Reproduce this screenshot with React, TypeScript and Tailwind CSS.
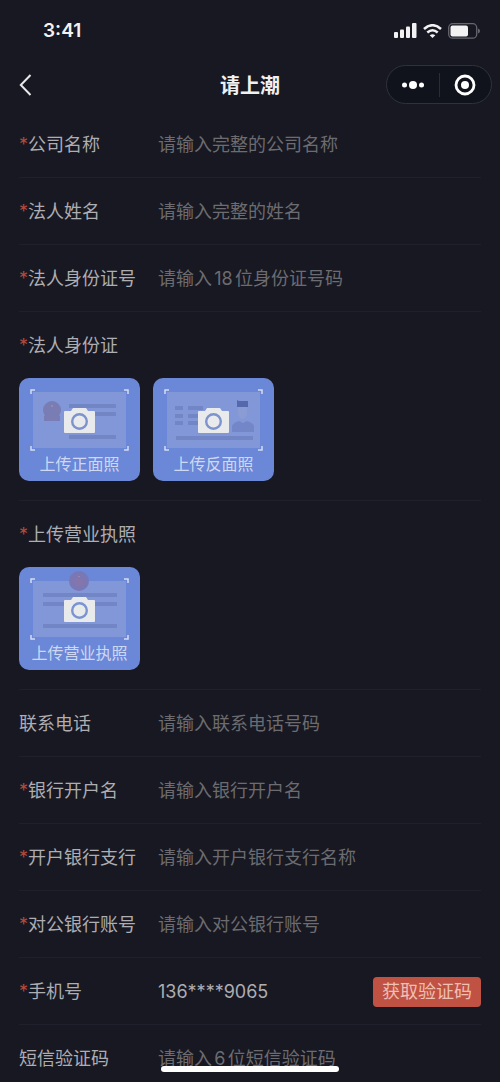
import React from "react";

type FieldProps = {
  id: string;
  label: string;
  required?: boolean;
  placeholder?: string;
  defaultValue?: string;
  type?: string;
  children?: React.ReactNode;
};

const RequiredMark = () => <span className="text-[#b34a3b]">*</span>;

const Field = ({
  id,
  label,
  required = true,
  placeholder,
  defaultValue,
  type = "text",
  children,
}: FieldProps) => {
  return (
    <div className="flex h-[67px] shrink-0 items-center border-b border-[#1f202b] pt-[2px]">
      <label htmlFor={id} className="w-[139px] shrink-0 whitespace-nowrap">
        {required && <RequiredMark />}
        {label}
      </label>
      <input
        id={id}
        type={type}
        placeholder={placeholder}
        defaultValue={defaultValue}
        className="min-w-0 flex-1 bg-transparent outline-none placeholder:text-[#6c6c70] [text-autospace:normal]"
      />
      {children}
    </div>
  );
};

const Lines = ({ x1, x2, ys }: { x1: number; x2: number; ys: number[] }) => (
  <g stroke="#7286c6" strokeWidth="4">
    {ys.map((y) => (
      <line key={y} x1={x1} x2={x2} y1={y} y2={y} />
    ))}
  </g>
);

const FrontArt = () => (
  <>
    <circle cx="33" cy="32" r="9" fill="#7a7cb4" />
    <path d="M25 43v-5l4-3h8l4 3v5z" fill="#7a7cb4" />
    <circle cx="33" cy="28" r="1" fill="#a08cb4" />
    <Lines x1={50} x2={97} ys={[28, 36, 59]} />
  </>
);

const BackArt = () => (
  <>
    <Lines x1={22} x2={30} ys={[30, 38, 45]} />
    <Lines x1={35} x2={50} ys={[30, 38, 45]} />
    <Lines x1={23} x2={100} ys={[60]} />
    <path d="M85 28h9v8q-1 5-4.500 5t-4.500-5z" fill="#8b9bd3" />
    <path d="M84 22l2 1h9v6H84z" fill="#5468ab" />
    <path d="M79 54v-6q1-3 7-5l4 2 4-2q6 2 7 5v6z" fill="#7387c8" />
  </>
);

const LicenseArt = () => (
  <>
    <circle cx="60" cy="14" r="10" fill="#7a78b4" />
    <circle cx="60" cy="10" r="1" fill="#a08cb4" />
    <circle cx="60" cy="15" r="5" fill="#8476ac" />
    <Lines x1={24} x2={98} ys={[28, 37, 59]} />
  </>
);

const UploadCard = ({
  text,
  children,
}: {
  text: string;
  children: React.ReactNode;
}) => {
  return (
    <label className="flex h-[103px] w-[121px] cursor-pointer flex-col items-center overflow-hidden rounded-[10px] bg-[#6b87d7]">
      <input type="file" accept="image/*" className="sr-only" />
      <svg viewBox="0 0 121 76" className="h-[76px] w-full" aria-hidden="true">
        <rect x="14" y="14" width="93" height="56" fill="#8297d7" />
        {children}
        {/* Corners */}
        <path
          d="M12 16v-4h4M105 12h4v4M109 68v4h-4M16 72h-4v-4"
          fill="none"
          stroke="#d5dcf2"
          strokeWidth="1.500"
        />
        {/* Camera */}
        <path
          d="M46 33h6l2-3h13l2 3h6a1 1 0 0 1 1 1v20a1 1 0 0 1-1 1H46a1 1 0 0 1-1-1V34a1 1 0 0 1 1-1z"
          fill="#e9eaec"
        />
        <circle
          cx="60.500"
          cy="43.500"
          r="7.300"
          fill="#e9eaec"
          stroke="#7d93cf"
          strokeWidth="2.400"
        />
      </svg>
      <span className="text-base leading-5 text-[#cfd8f3]">{text}</span>
    </label>
  );
};

const UploadSection = ({
  title,
  children,
}: {
  title: string;
  children: React.ReactNode;
}) => {
  return (
    <fieldset className="shrink-0 border-b border-[#1f202b] pb-[19px]">
      <legend className="flex h-[66px] items-center pt-px">
        <RequiredMark />
        {title}
      </legend>
      <div className="flex gap-[13px]">{children}</div>
    </fieldset>
  );
};

const StatusBar = () => {
  return (
    <div className="flex h-[60px] items-center justify-between pr-5 pl-[43px] pt-px text-[#f2f2f3]">
      <span className="text-[19px] font-semibold">3:41</span>
      <div className="flex items-center gap-[6px]">
        <svg width="23" height="15" viewBox="0 0 23 15" fill="currentColor">
          <rect x="0" y="9" width="4" height="6" rx="1" />
          <rect x="6" y="6.500" width="4" height="8.500" rx="1" />
          <rect x="12" y="3.500" width="4" height="11.500" rx="1" />
          <rect x="18" y="0" width="4.500" height="15" rx="1" />
        </svg>
        <svg width="19" height="14" viewBox="0 0 19 14" fill="none" stroke="currentColor">
          <path d="M1 5q8.500-7.500 17 0" strokeWidth="2.600" />
          <path d="M4.300 8.500q5.200-4.500 10.400 0" strokeWidth="2.500" />
          <path d="M9.500 14L6.700 11.300q2.800-2.300 5.600 0z" fill="currentColor" stroke="none" />
        </svg>
        <svg width="32" height="16" viewBox="0 0 32 16">
          <rect x="0.700" y="0.700" width="28" height="14.500" rx="4" fill="none" stroke="#66676e" strokeWidth="1.300" />
          <rect x="2.500" y="2.500" width="17.500" height="11" rx="2" fill="currentColor" />
          <path d="M30 5.500q2 .8 2 2.500t-2 2.500z" fill="#66676e" />
        </svg>
      </div>
    </div>
  );
};

const NavBar = () => {
  return (
    <header className="grid h-[51px] grid-cols-[1fr_auto_1fr] items-center pr-2 pb-[2px] pl-[19px]">
      <button type="button" aria-label="返回" className="h-8 w-8">
        <svg width="13" height="22" viewBox="0 0 13 22" fill="none" stroke="#e8e8ea" strokeWidth="2">
          <path d="M11.500 1L1.800 11l9.700 10" />
        </svg>
      </button>
      <h1 className="pt-[2px] pr-[11px] text-xl font-semibold text-[#f0f0f1]">请上潮</h1>
      <div className="flex h-[39px] w-[106px] items-center justify-self-end rounded-full border border-[#30323b] bg-[#11131c]">
        <button type="button" aria-label="更多" className="flex flex-1 justify-center">
          <svg width="24" height="22" viewBox="0 0 24 22" fill="#ffffff">
            <circle cx="3.500" cy="11" r="2.500" />
            <circle cx="12" cy="11" r="4" />
            <circle cx="20.500" cy="11" r="2.500" />
          </svg>
        </button>
        <span className="h-6 w-px bg-[#2b2d36]" />
        <button type="button" aria-label="关闭" className="flex flex-1 justify-center">
          <svg width="22" height="22" viewBox="0 0 22 22">
            <circle cx="11" cy="11" r="9" fill="none" stroke="#ffffff" strokeWidth="2.800" />
            <circle cx="11" cy="11" r="4" fill="#ffffff" />
          </svg>
        </button>
      </div>
    </header>
  );
};

const App = () => {
  return (
    <div className="flex h-screen flex-col bg-[#171822] font-[Inter,'Noto_Sans_CJK_SC',sans-serif] text-lg text-[#adadb2]">
      <StatusBar />
      <NavBar />

      <form className="flex min-h-0 flex-1 flex-col overflow-y-auto px-[19px] [scrollbar-width:none]">
        <Field id="company" label="公司名称" placeholder="请输入完整的公司名称" />
        <Field id="legalName" label="法人姓名" placeholder="请输入完整的姓名" />
        <Field id="legalId" label="法人身份证号" placeholder="请输入18位身份证号码" />

        <UploadSection title="法人身份证">
          <UploadCard text="上传正面照">
            <FrontArt />
          </UploadCard>
          <UploadCard text="上传反面照">
            <BackArt />
          </UploadCard>
        </UploadSection>

        <UploadSection title="上传营业执照">
          <UploadCard text="上传营业执照">
            <LicenseArt />
          </UploadCard>
        </UploadSection>

        <Field id="contact" label="联系电话" required={false} type="tel" placeholder="请输入联系电话号码" />
        <Field id="accountName" label="银行开户名" placeholder="请输入银行开户名" />
        <Field id="branch" label="开户银行支行" placeholder="请输入开户银行支行名称" />
        <Field id="accountNo" label="对公银行账号" placeholder="请输入对公银行账号" />
        <Field id="mobile" label="手机号" type="tel" defaultValue="136****9065">
          <button
            type="button"
            className="h-[30px] w-[108px] shrink-0 rounded bg-[#c05243] leading-[30px] text-[#efbfb2]"
          >
            获取验证码
          </button>
        </Field>
        <Field id="smsCode" label="短信验证码" required={false} placeholder="请输入6位短信验证码" />
      </form>

      {/* Home indicator */}
      <div className="pointer-events-none fixed inset-x-0 bottom-[10px] flex justify-center">
        <div className="h-[6px] w-[178px] rounded-full bg-white" />
      </div>
    </div>
  );
};

export default App;
